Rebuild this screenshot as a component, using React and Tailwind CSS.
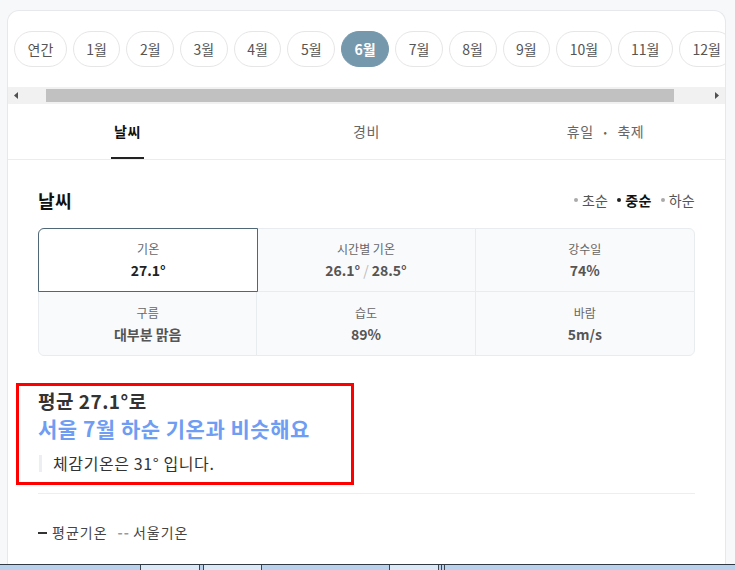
import React from "react";

const months = ["연간", "1월", "2월", "3월", "4월", "5월", "6월", "7월", "8월", "9월", "10월", "11월", "12월"];

const stats = [
  { label: "기온", value: "27.1°", selected: true },
  { label: "시간별 기온", value: ["26.1°", "28.5°"] },
  { label: "강수일", value: "74%" },
  { label: "구름", value: "대부분 맑음" },
  { label: "습도", value: "89%" },
  { label: "바람", value: "5m/s" },
];

function MonthPills() {
  return (
    <div className="flex gap-[6px] overflow-hidden pl-[6px] pt-5 pb-5">
      {months.map((m) => (
        <button
          key={m}
          className={
            m === "6월"
              ? "h-[36px] shrink-0 rounded-full border border-[#7598ad] bg-[#7598ad] px-[12.5px] text-[14px] font-bold text-white"
              : "h-[36px] shrink-0 rounded-full border border-[#e6e6e6] bg-white px-[12.5px] text-[14px] text-[#555]"
          }
        >
          {m}
        </button>
      ))}
    </div>
  );
}

function FakeScrollbar() {
  return (
    <div className="flex h-[17px] bg-[#f1f1f1]">
      <div className="flex w-[17px] items-center justify-center">
        <svg width="5" height="7" viewBox="0 0 5 7">
          <path d="M4 0 L0 3.5 L4 7 Z" fill="#505050" />
        </svg>
      </div>
      <div className="flex flex-1 items-center pl-[21px] pr-[34px]">
        <div className="h-[13px] w-full bg-[#c1c1c1]" />
      </div>
      <div className="flex w-[17px] items-center justify-center">
        <svg width="5" height="7" viewBox="0 0 5 7">
          <path d="M1 0 L5 3.5 L1 7 Z" fill="#505050" />
        </svg>
      </div>
    </div>
  );
}

function Tabs() {
  return (
    <div className="grid h-[56px] grid-cols-3 border-b border-[#ececec] tracking-[0.5px]">
      <div className="flex items-center justify-center">
        <span className="relative flex h-full items-center px-[3px] text-[14px] font-bold text-[#111]">
          날씨
          <span className="absolute bottom-0 left-0 right-0 h-[2px] bg-[#222]" />
        </span>
      </div>
      <div className="flex items-center justify-center text-[14px] text-[#666]">경비</div>
      <div className="flex items-center justify-center text-[14px] text-[#666]">
        휴일<span className="mx-[10px] text-[10px]">•</span>축제
      </div>
    </div>
  );
}

function StatGrid() {
  return (
    <div className="mt-[14px] grid grid-cols-3 rounded-md border border-[#e9ecef] bg-[#f9fafc]">
      {stats.map((s, i) => {
        const right = i % 3 !== 2 ? "border-r" : "";
        const bottom = i < 3 ? "border-b" : "";
        return (
          <div
            key={s.label}
            className={
              s.selected
                ? "relative z-10 -m-px flex h-[64px] flex-col items-center justify-center rounded-tl-md border border-[#4f6777] bg-white"
                : `flex h-[63px] flex-col items-center justify-center border-[#e9ecef] ${right} ${bottom}`
            }
          >
            <div className="text-[12px] leading-[18px] text-[#666]">{s.label}</div>
            <div
              className={
                s.selected
                  ? "mt-[2px] text-[14px] font-semibold leading-[20px] text-[#222]"
                  : "mt-[2px] text-[14px] font-semibold leading-[20px] text-[#555]"
              }
            >
              {Array.isArray(s.value) ? (
                <>
                  {s.value[0]}
                  <span className="mx-[3px] font-normal text-[#bbb]">/</span>
                  {s.value[1]}
                </>
              ) : (
                s.value
              )}
            </div>
          </div>
        );
      })}
    </div>
  );
}

function Summary() {
  return (
    <div className="relative mt-[32px]">
      <div className="text-[19px] font-bold leading-[26px] tracking-[0.5px] text-[#333]">평균 27.1°로</div>
      <div className="text-[21px] font-bold leading-[29px] tracking-[0.5px] text-[#6e9df3]">
        서울 7월 하순 기온과 비슷해요
      </div>
      <div className="mt-[10px] flex items-center">
        <div className="ml-[1px] h-[17px] w-[3px] bg-[#eceef1]" />
        <div className="ml-[11px] text-[16px] leading-[20px] tracking-[0.6px] text-[#333]">체감기온은 31° 입니다.</div>
      </div>
      {/* annotation box */}
      <div className="pointer-events-none absolute left-[-22px] top-[-5px] h-[102px] w-[338px] border-[3px] border-[#ff0000]" />
    </div>
  );
}

function Dot({ dark }) {
  return <span className={dark ? "mr-[4px] h-[4px] w-[4px] rounded-full bg-[#222]" : "mr-[4px] h-[4px] w-[4px] rounded-full bg-[#aaa]"} />;
}

export default function App() {
  return (
    <div
      className="flex h-[570px] w-[735px] flex-col overflow-hidden bg-[#f7f8fa]"
      style={{ fontFamily: '"Noto Sans CJK KR", "Noto Sans", sans-serif' }}
    >
      <div className="flex-1 overflow-hidden pl-[7px] pr-[9px] pt-[10px]">
        <div className="h-full rounded-t-[12px] border border-b-0 border-[#e6e8eb] bg-white">
          <MonthPills />
          <FakeScrollbar />
          <Tabs />

          <div className="px-[30px] pt-[26px]">
            <div className="flex h-[28px] items-center justify-between">
              <h2 className="text-[18px] font-bold tracking-[0.5px] text-[#111]">날씨</h2>
              <div className="flex items-center gap-[9px] text-[14px] tracking-[0.3px]">
                <span className="flex items-center text-[#555]">
                  <Dot />초순
                </span>
                <span className="flex items-center font-bold text-[#111]">
                  <Dot dark />중순
                </span>
                <span className="flex items-center text-[#555]">
                  <Dot />하순
                </span>
              </div>
            </div>

            <StatGrid />
            <Summary />

            <div className="mt-[20px] h-px bg-[#eeeeee]" />

            <div className="mt-[28px] flex items-center text-[14px] tracking-[1px] text-[#444]">
              <span className="mr-[5px] h-[2px] w-[9px] bg-[#333]" />
              평균기온
              <span className="ml-[10px] mr-[3px] font-bold text-[#999]">--</span>
              서울기온
            </div>
          </div>
        </div>
      </div>

      {/* taskbar strip */}
      <div className="flex h-[6px] shrink-0 border-t border-[#2f3a44] bg-[#b9d1ea]">
        <div className="ml-[140px] w-[60px] border-x border-[#3a4652] bg-[#dbe8f5]" />
        <div className="ml-[3px] w-[59px] border-x border-[#3a4652] bg-[#dbe8f5]" />
        <div className="ml-[127px] w-[50px] border-x border-[#3a4652] bg-[#dbe8f5]" />
        <div className="ml-[2px] w-[4px] border-x border-[#3a4652]" />
      </div>
    </div>
  );
}
